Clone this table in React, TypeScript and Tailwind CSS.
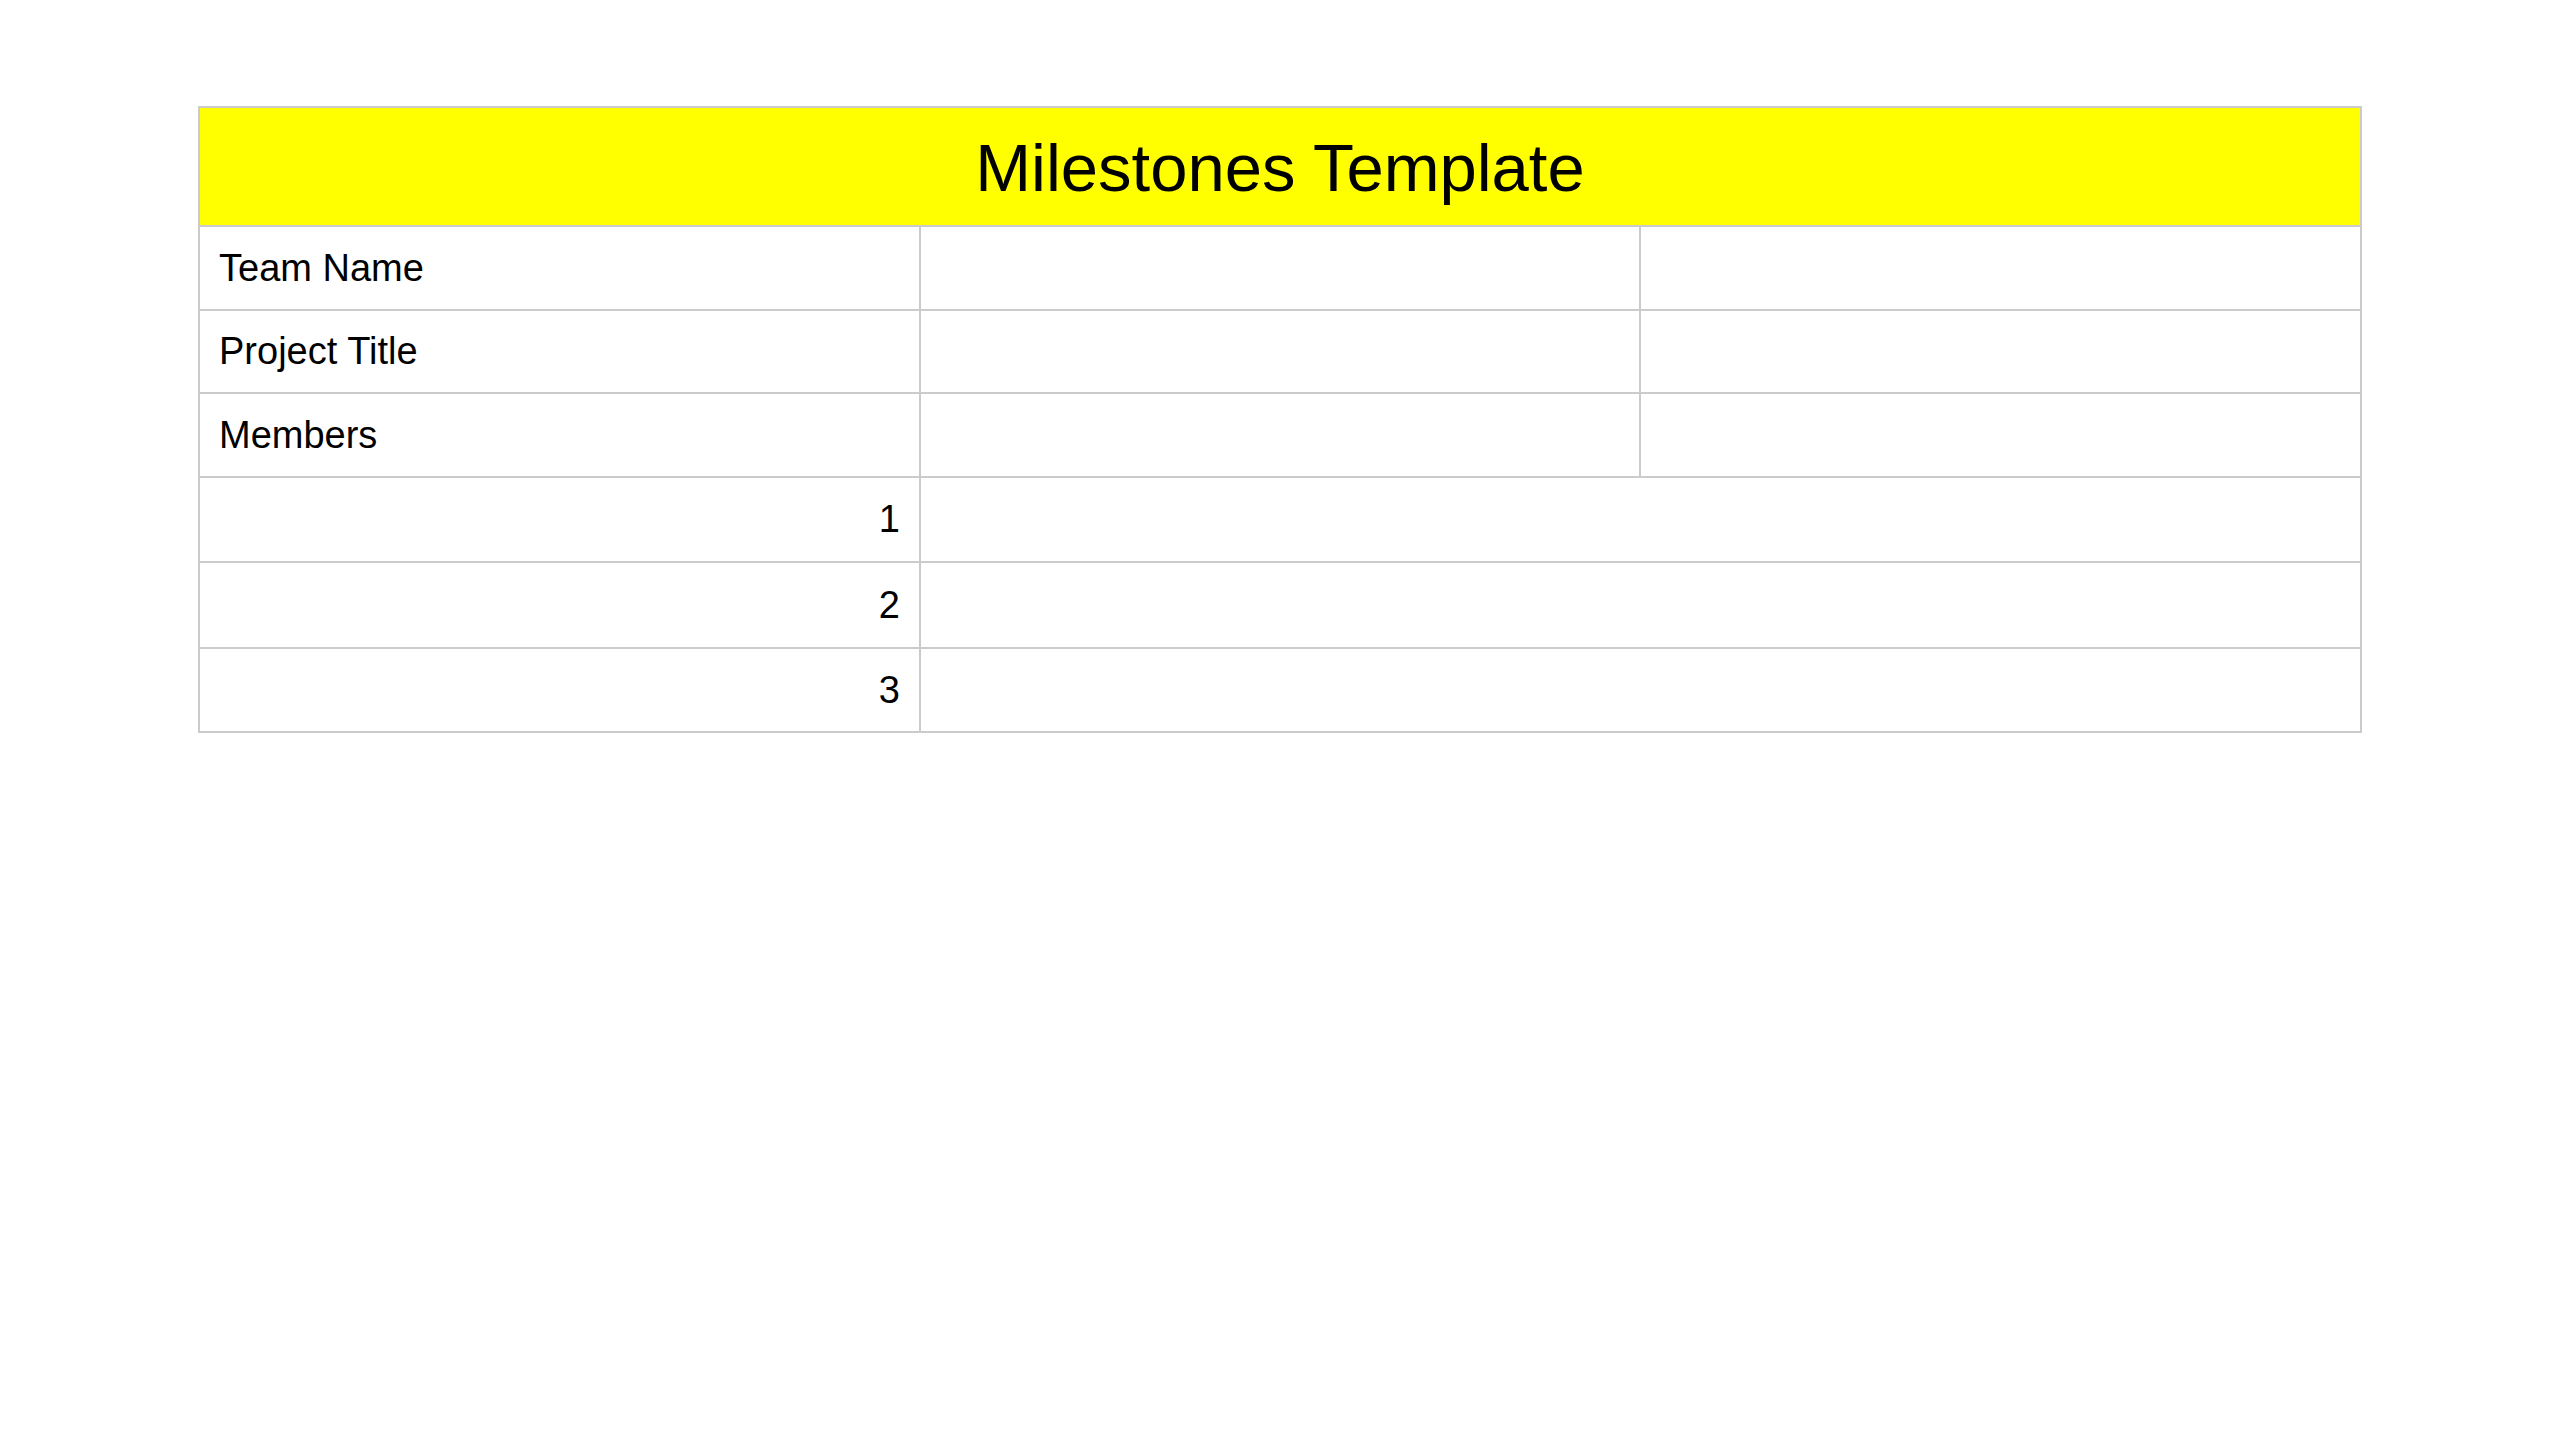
import React from "react";

const infoRows = [
  { label: "Team Name", h: "h-[84px]" },
  { label: "Project Title", h: "h-[83px]" },
  { label: "Members", h: "h-[84px]" },
];
const milestoneRows = [
  { n: "1", h: "h-[85px]" },
  { n: "2", h: "h-[86px]" },
  { n: "3", h: "h-[84px]" },
];

export default function App() {
  return (
    <div className="min-h-[1440px] w-[2560px] bg-white pl-[198px] pt-[106px] font-['Liberation_Sans',Arial,sans-serif] text-black">
      <div className="w-[2164px] border-2 border-[#cbcbcb]">
        {/* Title */}
        <div className="flex h-[117px] items-center justify-center bg-[#ffff00] pt-[2px] text-[67px] leading-none">
          Milestones Template
        </div>

        {/* Team info */}
        {infoRows.map((r) => (
          <div key={r.label} className={`grid grid-cols-[719px_720px_1fr] border-t-2 border-[#cbcbcb] ${r.h}`}>
            <div className="flex items-center pl-[19px] text-[38px]">{r.label}</div>
            <div className="border-l-2 border-[#cbcbcb]" />
            <div className="border-l-2 border-[#cbcbcb]" />
          </div>
        ))}

        {/* Milestones */}
        {milestoneRows.map((r) => (
          <div key={r.n} className={`grid grid-cols-[719px_1fr] border-t-2 border-[#cbcbcb] ${r.h}`}>
            <div className="flex items-center justify-end pr-[19px] text-[38px]">{r.n}</div>
            <div className="border-l-2 border-[#cbcbcb]" />
          </div>
        ))}
      </div>
    </div>
  );
}
